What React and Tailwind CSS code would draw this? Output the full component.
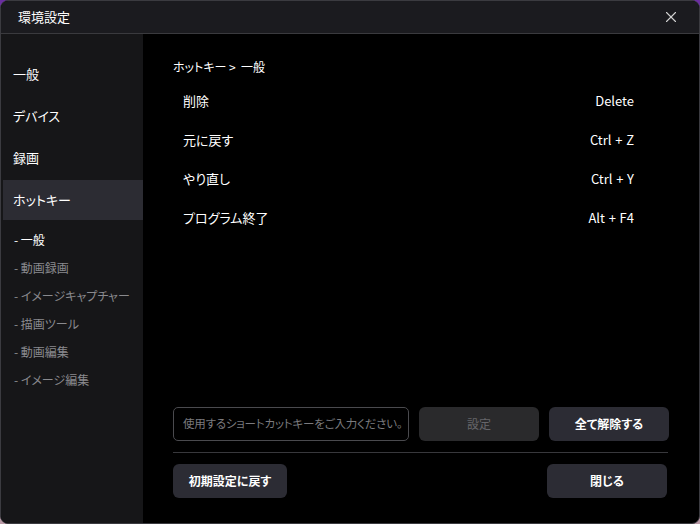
import React from 'react';
import { X } from 'lucide-react';

const font = { fontFamily: '"Noto Sans CJK JP", "Noto Sans", sans-serif' };

const mainItems = ['一般', 'デバイス', '録画', 'ホットキー'];
const subItems = ['一般', '動画録画', 'イメージキャプチャー', '描画ツール', '動画編集', 'イメージ編集'];
const hotkeys = [
  ['削除', 'Delete'],
  ['元に戻す', 'Ctrl + Z'],
  ['やり直し', 'Ctrl + Y'],
  ['プログラム終了', 'Alt + F4'],
];

const App = () => {
  return (
    <div className="w-[700px] h-[524px] bg-gradient-to-b from-[#6a2ea0] to-[#b99aa6] [font-feature-settings:'palt']" style={font}>
      <div className="w-full h-full flex flex-col rounded-[8px] border border-[#3b3b40] overflow-hidden bg-black">
        <div className="h-[33px] shrink-0 flex items-center justify-between pl-[17px] pr-[19px] bg-[#1b1b1f] border-b border-[#3a3a3e]">
          <span className="text-[13px] text-white">環境設定</span>
          <X size={18} strokeWidth={1.5} className="text-[#d0d0d0]" />
        </div>

        <div className="flex-1 flex min-h-0">
          <div className="w-[142px] shrink-0 bg-[#161618] pt-[20px] flex flex-col">
            {mainItems.map((item, i) => (
              <div
                key={item}
                className={`h-[40px] mb-[2px] flex items-center text-[13px] text-white ${
                  i === 3 ? 'bg-[#2c2c33] ml-[2px] pl-[10px]' : 'pl-[12px]'
                }`}
              >
                {item}
              </div>
            ))}
            <div className="pt-[4px] flex flex-col">
              {subItems.map((item, i) => (
                <div
                  key={item}
                  className={`h-[28px] flex items-center pl-[13px] text-[12px] ${
                    i === 0 ? 'text-white' : 'text-[#8a8a8e]'
                  }`}
                >
                  -&nbsp;{item}
                </div>
              ))}
            </div>
          </div>

          <div className="flex-1 flex flex-col pl-[30px] pr-[30px] pt-[24px] pb-[25px]">
            <div className="text-[12px] text-white leading-[18px]">ホットキー&nbsp;&gt;&nbsp;&nbsp;一般</div>
            <div className="mt-[16px] flex flex-col pl-[10px] pr-[35px]">
              {hotkeys.map(([label, key]) => (
                <div key={label} className="h-[39px] flex items-start justify-between text-[13px] text-white leading-[18px]">
                  <span>{label}</span>
                  <span className="whitespace-pre">{key.replace(/ /g, ' \u200A')}</span>
                </div>
              ))}
            </div>

            <div className="mt-auto flex items-center gap-[10px]">
              <div className="w-[236px] h-[34px] border border-[#4a4a4e] rounded-[5px] flex items-center px-[9px] text-[11.5px] tracking-[-0.2px] text-[#7a7a7e] whitespace-nowrap overflow-hidden">
                使用するショートカットキーをご入力ください。
              </div>
              <button className="w-[120px] h-[34px] rounded-[6px] bg-[#2a2a2c] text-[12px] text-[#66666a]">設定</button>
              <button className="w-[120px] h-[34px] rounded-[6px] bg-[#2c2c34] text-[12px] text-white font-bold">全て解除する</button>
            </div>
            <div className="mt-[11px] h-px bg-[#38383c] mr-[1px]" />
            <div className="mt-[11px] flex items-center justify-between">
              <button className="w-[114px] h-[34px] rounded-[6px] bg-[#2c2c34] text-[12px] text-white font-bold">初期設定に戻す</button>
              <button className="w-[120px] h-[34px] rounded-[6px] bg-[#2c2c34] text-[12px] text-white font-bold mr-[2px]">閉じる</button>
            </div>
          </div>
        </div>
      </div>
    </div>
  );
};

export default App;
